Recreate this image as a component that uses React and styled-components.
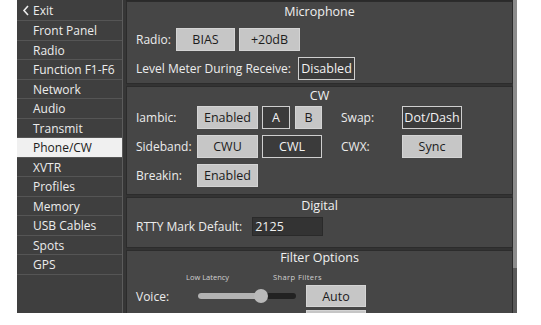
import React from "react";
import styled, { createGlobalStyle } from "styled-components";

const Global = createGlobalStyle`
  html, body { margin: 0; padding: 0; background: #ffffff; }
  body { font-family: "Open Sans", "Noto Sans", sans-serif; }
  * { box-sizing: border-box; }
`;

const Screen = styled.div`
  display: flex;
  padding-left: 17px;
  height: 313px;
`;

const Sidebar = styled.nav`
  width: 106px;
  background: #3f3f3f;
  border-right: 1px solid #5c5c5c;
  display: flex;
  flex-direction: column;
`;

const NavItem = styled.div`
  height: ${(p) => (p.$first ? "21.25px" : "19.5px")};
  display: flex;
  align-items: center;
  gap: 3px;
  padding-left: ${(p) => (p.$first ? "5px" : "16px")};
  border-bottom: 1px solid #555555;
  font-size: 12px;
  color: ${(p) => (p.$active ? "#202020" : "#ececec")};
  background: ${(p) => (p.$active ? "#f0f0f0" : "transparent")};
  white-space: nowrap;
`;

const Gutter = styled.div`
  width: 3px;
  background: #363636;
`;

const Main = styled.main`
  width: 387px;
  background: #333333;
  display: flex;
  flex-direction: column;
  gap: 2px;
  overflow: hidden;
  border-top: 1px solid #2a2a2a;
`;

const Scroll = styled.div`
  width: 4px;
  background: #5a5a5a;
  display: flex;
  flex-direction: column;
`;

const Thumb = styled.div`
  height: 268px;
  background: #8c8c8c;
`;

const Section = styled.section`
  flex: none;
  height: ${(p) => p.$h}px;
  background: #464646;
  border: 1px solid #2c2c2c;
  padding: 0 9px;
  display: flex;
  flex-direction: column;
  color: #ececec;
  font-size: 12px;
`;

const Title = styled.div`
  text-align: center;
  font-size: 12.5px;
  line-height: 14px;
  color: #f0f0f0;
  margin-top: ${(p) => p.$mt || 0}px;
  margin-bottom: ${(p) => p.$mb || 0}px;
`;

const Row = styled.div`
  display: flex;
  align-items: center;
  gap: ${(p) => p.$gap || 6}px;
  margin-bottom: ${(p) => p.$mb || 0}px;
`;

const Label = styled.span`
  color: #ececec;
  font-size: 12px;
  white-space: nowrap;
  width: ${(p) => (p.$w ? `${p.$w}px` : "auto")};
`;

const Btn = styled.div`
  width: ${(p) => p.$w || 60}px;
  height: ${(p) => p.$hgt || 23}px;
  display: flex;
  align-items: center;
  justify-content: center;
  font-size: 12.5px;
  white-space: nowrap;
  border: 1px solid ${(p) => (p.$on ? "#d4d4d4" : "#cfcfcf")};
  background: ${(p) => (p.$on ? "#c6c6c6" : "#3b3b3b")};
  color: ${(p) => (p.$on ? "#1c1c1c" : "#f2f2f2")};
`;

const Grid = styled.div`
  display: grid;
  grid-template-columns: 61px 61px 64px 19px 61px 60px;
  grid-auto-rows: 23px;
  row-gap: 6px;
  align-items: center;
`;

const Pair = styled.div`
  display: flex;
  gap: 5px;
  padding-left: 4px;
`;

const Input = styled.div`
  width: 71px;
  height: 19px;
  background: #333333;
  border: 1px solid #2a2a2a;
  color: #f0f0f0;
  font-size: 12.5px;
  display: flex;
  align-items: center;
  padding-left: 2px;
`;

const SliderLabels = styled.div`
  display: flex;
  font-size: 7.5px;
  color: #d0d0d0;
  height: 10px;
  align-items: center;
  margin-left: 50px;
  margin-top: 7px;
  margin-bottom: 3px;
`;

const SmallLabel = styled.span`
  width: ${(p) => p.$w}px;
  white-space: nowrap;
  letter-spacing: ${(p) => p.$ls || 0}px;
`;

const FilterGrid = styled.div`
  display: grid;
  grid-template-columns: 53px 117px 60px;
  grid-auto-rows: 22px;
  row-gap: 3px;
  align-items: center;
`;

const SliderWrap = styled.div`
  position: relative;
  width: 98px;
  height: 14px;
  display: flex;
  align-items: center;
  margin-left: 9px;
`;

const Track = styled.div`
  width: 100%;
  height: 6px;
  border-radius: 3px;
  background: #222222;
  overflow: hidden;
`;

const Fill = styled.div`
  height: 100%;
  background: #b3b3b3;
`;

const Knob = styled.div`
  position: absolute;
  top: 0;
  width: 14px;
  height: 14px;
  border-radius: 50%;
  background: #b9b9b9;
  transform: translateX(-50%);
`;

const Chevron = () => (
  <svg width="8" height="11" viewBox="0 0 8 11">
    <polyline points="6,1 2,5.5 6,10" fill="none" stroke="#ececec" strokeWidth="1.6" />
  </svg>
);

const items = [
  "Front Panel",
  "Radio",
  "Function F1-F6",
  "Network",
  "Audio",
  "Transmit",
  "Phone/CW",
  "XVTR",
  "Profiles",
  "Memory",
  "USB Cables",
  "Spots",
  "GPS",
];

export default function App() {
  const pct = 64;
  return (
    <>
      <Global />
      <Screen>
        <Sidebar>
          <NavItem $first>
            <Chevron />
            Exit
          </NavItem>
          {items.map((it) => (
            <NavItem key={it} $active={it === "Phone/CW"}>
              {it}
            </NavItem>
          ))}
        </Sidebar>
        <Gutter />
        <Main>
          <Section $h={83}>
            <Title $mt={3} $mb={9}>Microphone</Title>
            <Row $gap={4} $mb={6}>
              <Label $w={36}>Radio:</Label>
              <Btn $on $w={59}>BIAS</Btn>
              <Btn $on $w={61}>+20dB</Btn>
            </Row>
            <Row $gap={7}>
              <Label>Level Meter During Receive:</Label>
              <Btn $w={57}>Disabled</Btn>
            </Row>
          </Section>
          <Section $h={109}>
            <Title $mt={2} $mb={3}>CW</Title>
            <Grid>
              <Label>Iambic:</Label>
              <Btn $on $w={61}>Enabled</Btn>
              <Pair>
                <Btn $w={28}>A</Btn>
                <Btn $on $w={27}>B</Btn>
              </Pair>
              <span />
              <Label>Swap:</Label>
              <Btn $w={60}>Dot/Dash</Btn>

              <Label>Sideband:</Label>
              <Btn $on $w={61}>CWU</Btn>
              <Pair>
                <Btn $w={60}>CWL</Btn>
              </Pair>
              <span />
              <Label>CWX:</Label>
              <Btn $on $w={60}>Sync</Btn>

              <Label>Breakin:</Label>
              <Btn $on $w={61}>Enabled</Btn>
            </Grid>
          </Section>
          <Section $h={51}>
            <Title $mt={1} $mb={4}>Digital</Title>
            <Row $gap={10}>
              <Label>RTTY Mark Default:</Label>
              <Input>2125</Input>
            </Row>
          </Section>
          <Section $h={120}>
            <Title>Filter Options</Title>
            <SliderLabels>
              <SmallLabel $w={87}>Low Latency</SmallLabel>
              <SmallLabel $w={60} $ls={0.4}>Sharp Filters</SmallLabel>
            </SliderLabels>
            <FilterGrid>
              <Label>Voice:</Label>
              <SliderWrap>
                <Track>
                  <Fill style={{ width: `${pct}%` }} />
                </Track>
                <Knob style={{ left: `${pct}%` }} />
              </SliderWrap>
              <Btn $on $w={60} $hgt={22}>Auto</Btn>
              <span />
              <span />
              <Btn $on $w={60} $hgt={22} aria-hidden="true" />
            </FilterGrid>
          </Section>
        </Main>
        <Scroll>
          <Thumb />
        </Scroll>
      </Screen>
    </>
  );
}
